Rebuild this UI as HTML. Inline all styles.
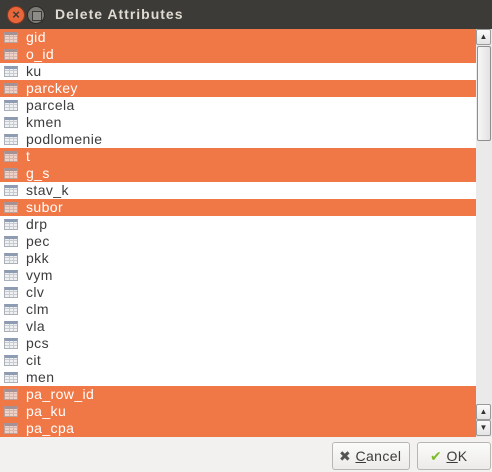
<!DOCTYPE html>
<html><head><style>
*{margin:0;padding:0;box-sizing:border-box}
body{width:492px;height:472px;overflow:hidden;background:#f2f1f0;font-family:"Liberation Sans","DejaVu Sans",sans-serif;position:relative}
.title{position:absolute;left:0;top:0;width:492px;height:29px;background:#3c3b37;}
.title .t{position:absolute;left:55px;top:6px;color:#dfdbd2;font-weight:bold;font-size:14px;letter-spacing:1px}
.close{position:absolute;left:7px;top:6px;width:18px;height:18px;border-radius:50%;background:#e9663b;border:1px solid #8a3a1f;color:#3c3b37;font-weight:bold;font-size:13px;line-height:15px;text-align:center}
.min{position:absolute;left:27px;top:6px;width:18px;height:18px;border-radius:50%;background:#7c7b76;border:1px solid #2a2a28}
.min:after{content:"";position:absolute;left:4px;top:4px;width:8px;height:8px;border:1px solid #3c3b37;background:#8d8c87}
.list{position:absolute;left:0;top:29px;width:476px;height:408px;background:#fff;overflow:hidden}
.r{height:17px;line-height:17px;font-size:14px;letter-spacing:0.4px;color:#3c3c3c;padding-left:26px;position:relative}
.r.s{background:#f07746;color:#fff}
.r i{position:absolute;left:4px;top:3px;width:14px;height:11px;border:1px solid #aab0b8;border-top:3px solid #8d9bb3;background:
linear-gradient(90deg,transparent 4px,#c8ccd2 4px,#c8ccd2 5px,transparent 5px,transparent 8px,#c8ccd2 8px,#c8ccd2 9px,transparent 9px),
repeating-linear-gradient(0deg,#eef0f2 0,#eef0f2 2px,#c8ccd2 2px,#c8ccd2 3px)}
.r.s i{opacity:.75}
.sb{position:absolute;left:476px;top:29px;width:16px;height:408px;background:#eaeaea}
.btn{position:absolute;left:476px;width:15px;height:16px;background:linear-gradient(#fafafa,#e4e4e4);border:1px solid #9a9a9a;border-radius:2px;font-size:8px;text-align:center;line-height:14px;color:#333}
.thumb{position:absolute;left:477px;top:46px;width:14px;height:95px;background:linear-gradient(90deg,#f7f7f7,#e2e2e2);border:1px solid #8f8f8f;border-radius:2px}
.b{position:absolute;top:442px;height:28px;border:1px solid #b8b6b2;border-radius:3px;background:linear-gradient(#fbfbfa,#ecebe9);font-size:14px;letter-spacing:0.4px;color:#3c3c3c;line-height:26px}
</style></head><body>
<div class="title"><div class="close">×</div><div class="min"></div><div class="t">Delete Attributes</div></div>
<div class="list">
<div class="r s"><i></i>gid</div>
<div class="r s"><i></i>o_id</div>
<div class="r"><i></i>ku</div>
<div class="r s"><i></i>parckey</div>
<div class="r"><i></i>parcela</div>
<div class="r"><i></i>kmen</div>
<div class="r"><i></i>podlomenie</div>
<div class="r s"><i></i>t</div>
<div class="r s"><i></i>g_s</div>
<div class="r"><i></i>stav_k</div>
<div class="r s"><i></i>subor</div>
<div class="r"><i></i>drp</div>
<div class="r"><i></i>pec</div>
<div class="r"><i></i>pkk</div>
<div class="r"><i></i>vym</div>
<div class="r"><i></i>clv</div>
<div class="r"><i></i>clm</div>
<div class="r"><i></i>vla</div>
<div class="r"><i></i>pcs</div>
<div class="r"><i></i>cit</div>
<div class="r"><i></i>men</div>
<div class="r s"><i></i>pa_row_id</div>
<div class="r s"><i></i>pa_ku</div>
<div class="r s"><i></i>pa_cpa</div>
</div>
<div class="sb"></div>
<div class="btn" style="top:29px">▲</div>
<div class="thumb"></div>
<div class="btn" style="top:404px">▲</div>
<div class="btn" style="top:420px">▼</div>
<div class="b" style="left:332px;width:78px;padding-left:6px"><span style="font-weight:bold;color:#555">✖</span> <u>C</u>ancel</div>
<div class="b" style="left:417px;width:74px;padding-left:12px"><span style="color:#7cbb2a;font-weight:bold">✔</span> <u>O</u>K</div>
</body></html>
